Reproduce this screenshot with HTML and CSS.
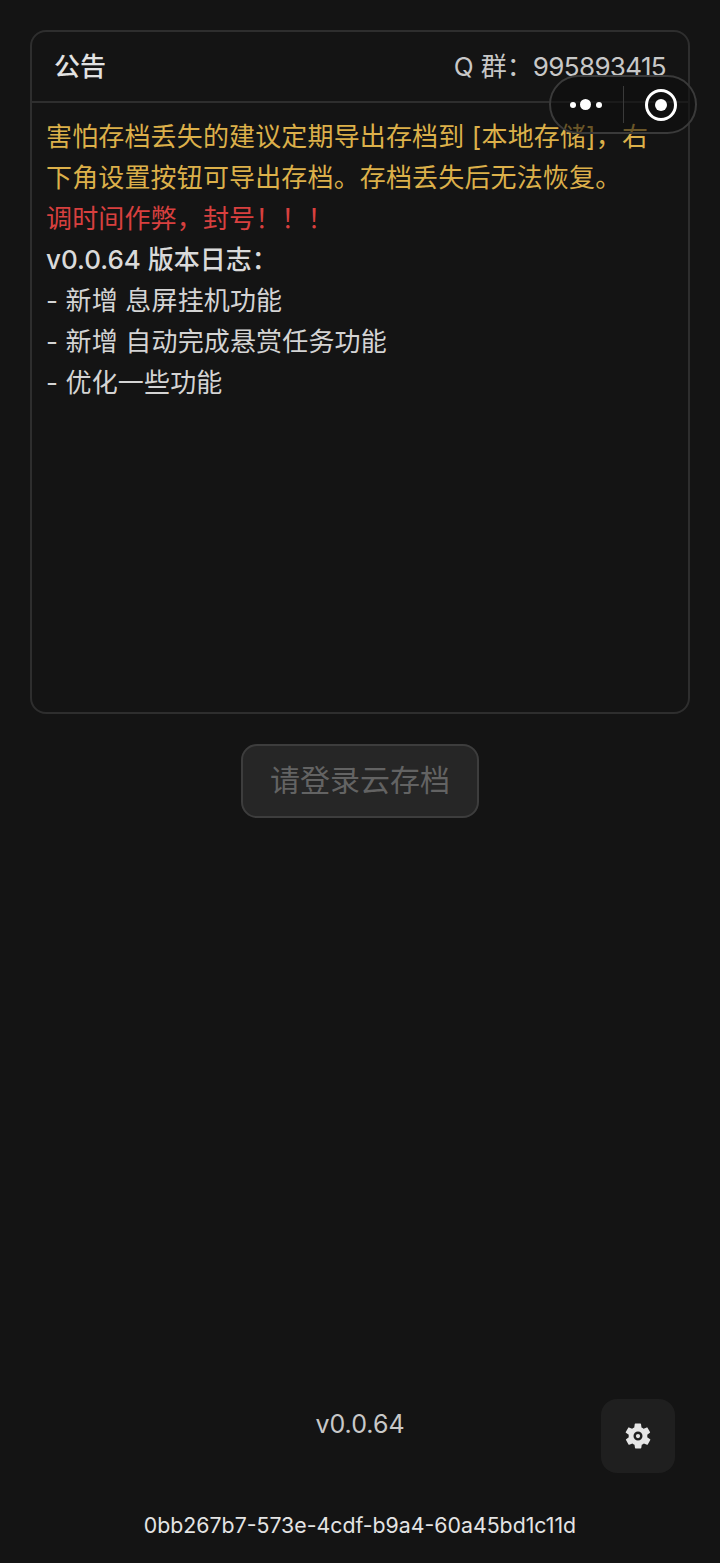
FILE: index.html
```html
<!DOCTYPE html>
<html lang="zh-CN">
<head>
<meta charset="utf-8">
<title>公告</title>
<link rel="stylesheet" href="styles.css">
</head>
<body>
<main class="page">
  <section class="card">
    <header class="card-head">
      <span class="card-title">公告</span>
      <span class="card-group">Q 群：<span class="card-qq">995893415</span></span>
    </header>
    <div class="card-body">
      <p class="line warn">害怕存档丢失的建议定期导出存档到 [本地存储]，右下角设置按钮可导出存档。存档丢失后无法恢复。</p>
      <p class="line danger">调时间作弊，封号！！！</p>
      <p class="line strong">v0.0.64 版本日志：</p>
      <p class="line">- 新增 息屏挂机功能</p>
      <p class="line">- 新增 自动完成悬赏任务功能</p>
      <p class="line">- 优化一些功能</p>
    </div>
  </section>
  <button class="cloud-btn" type="button" disabled>请登录云存档</button>
  <footer class="foot">
    <div class="foot-row">
      <span class="version">v0.0.64</span>
      <button class="gear-btn" type="button" aria-label="设置">
        <svg class="gear" viewBox="0 0 24 24" width="30" height="30"><path fill-rule="evenodd" fill="#e6e6e6" d="M19.4 13a7.6 7.6 0 0 0 0-2l2.1-1.6a.5.5 0 0 0 .1-.6l-2-3.5a.5.5 0 0 0-.6-.2l-2.5 1a7.4 7.4 0 0 0-1.7-1l-.4-2.7a.5.5 0 0 0-.5-.4h-4a.5.5 0 0 0-.5.4l-.4 2.7a7.4 7.4 0 0 0-1.7 1l-2.5-1a.5.5 0 0 0-.6.2l-2 3.5a.5.5 0 0 0 .1.6L4.6 11a7.6 7.6 0 0 0 0 2l-2.1 1.6a.5.5 0 0 0-.1.6l2 3.5c.1.2.4.3.6.2l2.5-1c.5.4 1.1.7 1.7 1l.4 2.7c0 .2.3.4.5.4h4c.2 0 .5-.2.5-.4l.4-2.7c.6-.3 1.2-.6 1.7-1l2.5 1c.2.1.5 0 .6-.2l2-3.5a.5.5 0 0 0-.1-.6L19.4 13ZM12 15.6a3.6 3.6 0 1 1 0-7.2 3.6 3.6 0 0 1 0 7.2Zm0-1.9a1.7 1.7 0 1 0 0-3.4 1.7 1.7 0 0 0 0 3.4Z"/></svg>
      </button>
    </div>
    <div class="uuid">0bb267b7-573e-4cdf-b9a4-60a45bd1c11d</div>
  </footer>
</main>
<div class="capsule">
  <div class="capsule-dots"><i class="dot"></i><i class="dot dot-big"></i><i class="dot"></i></div>
  <i class="capsule-sep"></i>
  <div class="capsule-target"><i class="target-core"></i></div>
</div>
</body>
</html>
```

FILE: styles.css
```css
* { box-sizing: border-box; }
html, body { margin: 0; padding: 0; background: #141414; }
body {
  font-family: "Inter", "Noto Sans CJK SC", sans-serif;
  color: #dcdcdc;
}
.page {
  position: relative;
  height: 1563px;
  padding: 30px 30px 0;
  display: flex;
  flex-direction: column;
  align-items: center;
}
.card {
  width: 660px;
  height: 684px;
  border: 2px solid #2e2e2e;
  border-radius: 16px;
  flex: none;
}
.card-head {
  height: 71px;
  padding: 0 22px 4px 22px;
  border-bottom: 2px solid #2e2e2e;
  display: flex;
  align-items: center;
  justify-content: space-between;
}
.card-title { font-size: 26px; font-weight: 500; color: #e2e2e2; }
.card-group { font-size: 26px; color: #c8c8c8; }
.card-qq { letter-spacing: -0.65px; }
.card-body { padding: 13px 26px 0 14px; }
.line {
  margin: 0;
  font-size: 26px;
  line-height: 41px;
  letter-spacing: 0.15px;
  color: #d4d4d4;
}
.warn { color: #dcb04a; }
.danger { color: #d8403f; }
.strong { font-weight: 500; letter-spacing: 0; color: #dadada; }
.cloud-btn {
  margin-top: 30px;
  width: 238px;
  height: 74px;
  background: #262626;
  border: 2px solid #3d3d3d;
  border-radius: 16px;
  color: #636363;
  font-family: inherit;
  font-size: 30px;
  padding: 0 0 6px;
  flex: none;
}
.foot {
  margin-top: auto;
  width: 100%;
  padding-bottom: 20px;
}
.foot-row {
  position: relative;
  height: 74px;
  display: flex;
  justify-content: center;
}
.version { font-size: 25px; line-height: 50px; color: #c8c8c8; }
.gear-btn {
  position: absolute;
  right: 15px;
  top: 0;
  width: 74px;
  height: 74px;
  background: #1f1f1f;
  border: 0;
  border-radius: 16px;
  padding: 0;
  display: flex;
  align-items: center;
  justify-content: center;
}
.uuid {
  margin-top: 34px;
  text-align: center;
  font-size: 21.3px;
  line-height: 36px;
  color: #e4e4e4;
}
.capsule {
  position: absolute;
  left: 549px;
  top: 75px;
  width: 148px;
  height: 59px;
  border: 2px solid #3a3a3a;
  border-radius: 30px;
  background: rgba(12, 12, 12, 0.55);
  display: flex;
  align-items: center;
}
.capsule-dots {
  width: 69px;
  margin-right: 3px;
  display: flex;
  align-items: center;
  justify-content: center;
  gap: 4.5px;
}
.dot { width: 6px; height: 6px; border-radius: 50%; background: #fff; }
.dot-big { width: 11px; height: 11px; }
.capsule-sep { width: 1px; height: 37px; background: #3a3a3a; }
.capsule-target {
  margin-left: 21px;
  width: 32px;
  height: 32px;
  border: 3px solid #fff;
  border-radius: 50%;
  display: flex;
  align-items: center;
  justify-content: center;
}
.target-core { width: 12px; height: 12px; border-radius: 50%; background: #fff; }
```
